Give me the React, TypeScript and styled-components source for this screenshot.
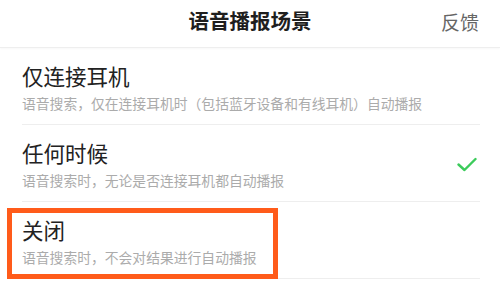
import styled, { createGlobalStyle } from "styled-components";

const GlobalStyle = createGlobalStyle`
    html, body {
        margin: 0;
        padding: 0;
        background: #ffffff;
    }
    body {
        font-family: "Noto Sans CJK SC", "Noto Sans", sans-serif;
        width: 500px;
        height: 284px;
        overflow: hidden;
    }
`;

const options = [
    {
        title: "仅连接耳机",
        desc: "语音搜索，仅在连接耳机时（包括蓝牙设备和有线耳机）自动播报",
        checked: false,
        highlighted: false,
    },
    {
        title: "任何时候",
        desc: "语音搜索时，无论是否连接耳机都自动播报",
        checked: true,
        highlighted: false,
    },
    {
        title: "关闭",
        desc: "语音搜索时，不会对结果进行自动播报",
        checked: false,
        highlighted: true,
    },
];

export default function App() {
    return (
        <>
            <GlobalStyle />
            <Screen>
                <Header>
                    <HeaderTitle>语音播报场景</HeaderTitle>
                    <HeaderAction>反馈</HeaderAction>
                </Header>
                <OptionList>
                    {options.map((item) => (
                        <OptionRow key={item.title}>
                            <OptionText>
                                <OptionTitle>{item.title}</OptionTitle>
                                <OptionDesc>{item.desc}</OptionDesc>
                            </OptionText>
                            {item.checked && (
                                <CheckMark viewBox="0 0 20 15">
                                    <path d="M1.5 7.5 L7.5 13 L18.5 2" />
                                </CheckMark>
                            )}
                            {item.highlighted && <Highlight />}
                        </OptionRow>
                    ))}
                </OptionList>
            </Screen>
        </>
    );
}

const Screen = styled.div`
    width: 500px;
    height: 284px;
    background: #ffffff;
    overflow: hidden;
`;

const Header = styled.div`
    position: relative;
    height: 48px;
    display: flex;
    justify-content: center;
    align-items: flex-start;
    padding-top: 7px;
    box-sizing: border-box;
    border-bottom: 1px solid #eeeeee;
    box-shadow: 0 1px 2px rgba(0, 0, 0, 0.03);
`;

const HeaderTitle = styled.h1`
    margin: 0;
    font-size: 20.5px;
    line-height: 26px;
    font-weight: 700;
    color: #1e1e1e;
`;

const HeaderAction = styled.span`
    position: absolute;
    right: 21px;
    top: 9px;
    font-size: 19px;
    line-height: 26px;
    color: #666666;
`;

const OptionList = styled.div`
    display: flex;
    flex-direction: column;
`;

const OptionRow = styled.div`
    position: relative;
    margin: 0 20px 0 22px;
    padding: 15px 0 12px;
    display: flex;
    align-items: center;
    justify-content: space-between;
    border-bottom: 1px solid #eeeeee;
`;

const OptionText = styled.div`
    display: flex;
    flex-direction: column;
    gap: 5px;
`;

const OptionTitle = styled.div`
    font-size: 21.5px;
    line-height: 26px;
    color: #222222;
`;

const OptionDesc = styled.div`
    font-size: 13.8px;
    line-height: 18px;
    color: #ababab;
    white-space: nowrap;
`;

const CheckMark = styled.svg`
    width: 20px;
    height: 15px;
    margin-right: 3px;
    margin-top: 0;
    fill: none;
    stroke: #3ccb5b;
    stroke-width: 2.4;
    stroke-linecap: round;
    stroke-linejoin: round;
`;

const Highlight = styled.div`
    position: absolute;
    left: -15px;
    top: 6px;
    width: 271px;
    height: 71px;
    box-sizing: border-box;
    border: 5px solid #ff5b1a;
    pointer-events: none;
`;
